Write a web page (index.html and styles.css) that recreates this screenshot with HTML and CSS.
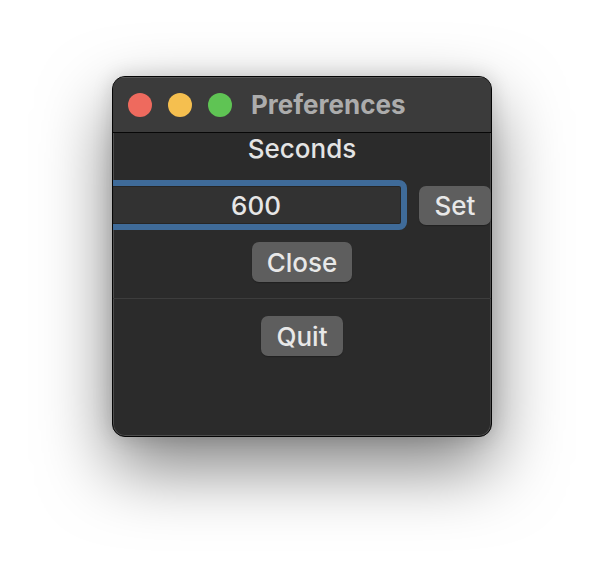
FILE: index.html
```html
<!DOCTYPE html>
<html lang="en">
<head>
  <meta charset="UTF-8">
  <title>Preferences</title>
  <link rel="stylesheet" href="styles.css">
</head>
<body>
  <div class="window">
    <div class="titlebar">
      <span class="light red"></span>
      <span class="light yellow"></span>
      <span class="light green"></span>
      <span class="title">Preferences</span>
    </div>

    <div class="content">
      <div class="label">Seconds</div>
      <div class="input-row">
        <input class="seconds" type="text" value="600">
        <button class="btn set">Set</button>
      </div>
      <button class="btn close">Close</button>
      <div class="separator"></div>
      <button class="btn quit">Quit</button>
    </div>
  </div>
</body>
</html>
```

FILE: styles.css
```css
html, body {
  min-height: 100%;
}

body {
  margin: 0;
  padding: 76px 0 147px 112px;
  background: #ffffff;
  font-family: Inter, "Liberation Sans", sans-serif;
}

.window {
  box-sizing: border-box;
  width: 380px;
  height: 361px;
  background: #2b2b2b;
  border: 1px solid #050505;
  border-radius: 13px;
  overflow: hidden;
  box-shadow: inset 0 0 0 1px rgba(255,255,255,0.16), 0 30px 70px rgba(0,0,0,0.5), 0 0 20px rgba(0,0,0,0.15);
}

.titlebar {
  height: 55px;
  display: flex;
  align-items: center;
  padding-left: 15px;
  background: #3b3b3b;
  border-bottom: 1px solid #070707;
  box-shadow: inset 0 1px 0 rgba(255,255,255,0.14);
}

.light {
  width: 24px;
  height: 24px;
  border-radius: 50%;
  margin-right: 16px;
}

.red { background: #ee6a5e; }
.yellow { background: #f5bf4f; }
.green { background: #5fc454; }

.title {
  margin-left: 3px;
  font-size: 26px;
  font-weight: 700;
  color: #acacac;
}

.content {
  display: flex;
  flex-direction: column;
  align-items: center;
}

.label {
  height: 32px;
  line-height: 32px;
  font-size: 26px;
  font-weight: 500;
  color: #e4e4e4;
}

.input-row {
  align-self: stretch;
  display: flex;
  align-items: center;
  gap: 12px;
  margin-top: 15px;
}

.seconds {
  box-sizing: border-box;
  flex: 1;
  min-width: 0;
  height: 50px;
  margin-left: -8px;
  padding: 0;
  background: #323232;
  border: 6px solid #3f6b99;
  border-radius: 8px;
  box-shadow: inset 0 0 0 1px #262626;
  color: #e6e6e6;
  font-family: inherit;
  font-size: 26px;
  font-weight: 500;
  text-align: center;
  outline: none;
}

.btn {
  height: 40px;
  padding: 0;
  background: #5e5e5e;
  border: none;
  border-radius: 7px;
  color: #e8e8e8;
  font-family: inherit;
  font-size: 26px;
  font-weight: 500;
  box-shadow: 0 1px 1px rgba(0,0,0,0.25);
}

.set {
  width: 72px;
  height: 39px;
}

.close {
  width: 100px;
  margin-top: 12px;
}

.separator {
  align-self: stretch;
  height: 1px;
  margin-top: 16px;
  background: #3d3d3d;
}

.quit {
  width: 82px;
  margin-top: 17px;
}
```
